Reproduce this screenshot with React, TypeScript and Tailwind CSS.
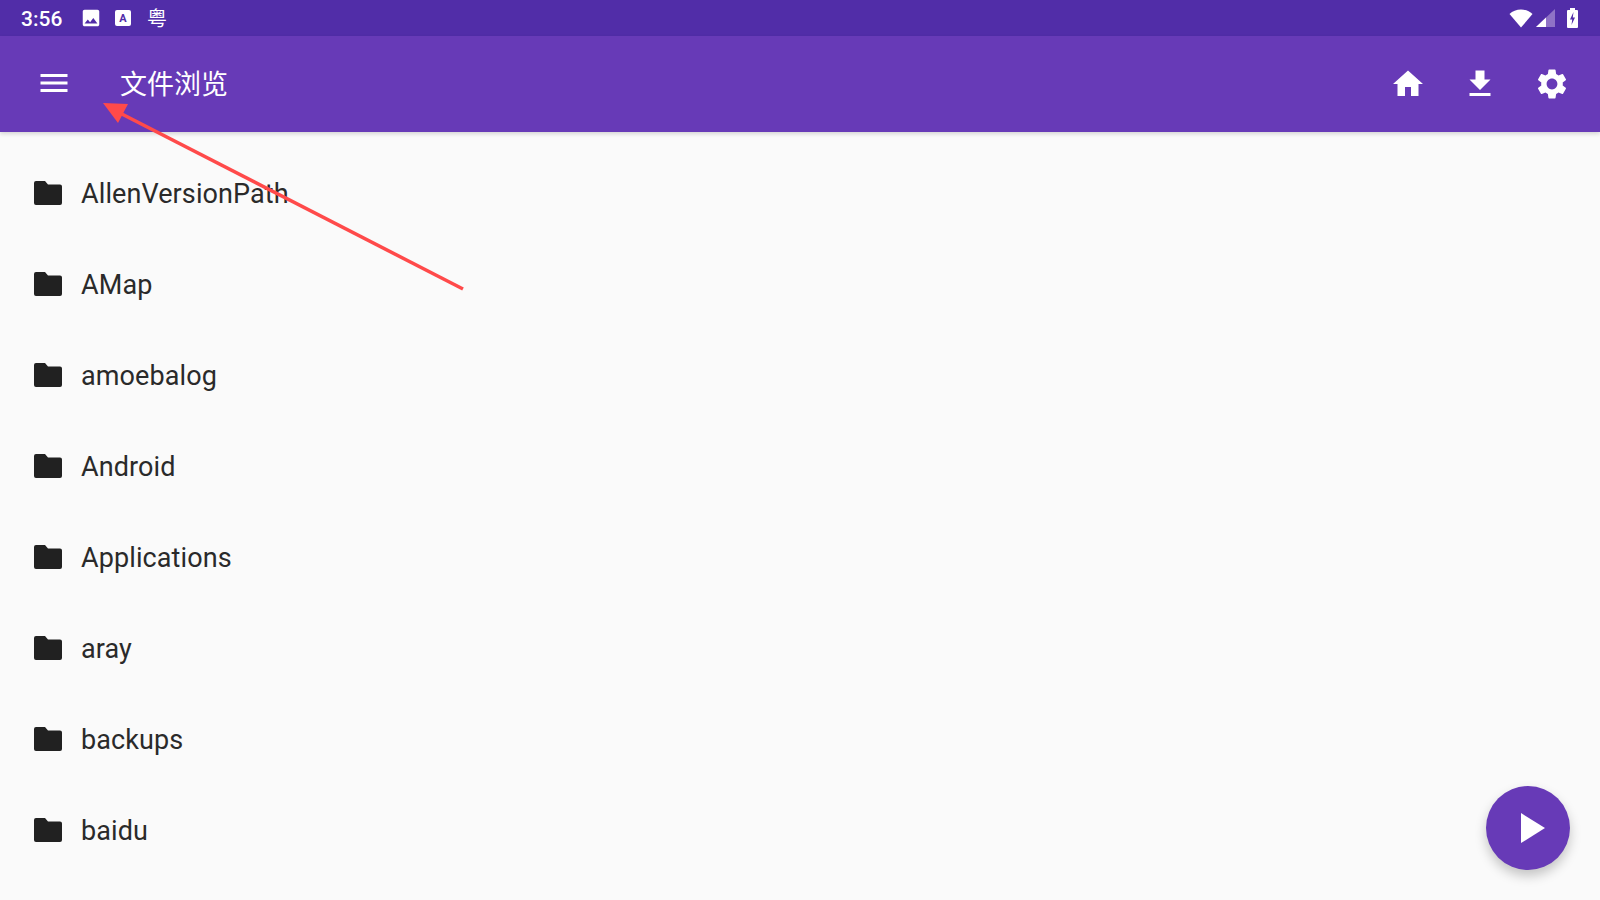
import React from "react";
import { MdHome, MdFileDownload, MdSettings, MdMenu, MdImage } from "react-icons/md";

const names = ["AllenVersionPath", "AMap", "amoebalog", "Android", "Applications", "aray", "backups", "baidu"];

function Folder() {
  return (
    <svg width="28" height="24" viewBox="0 0 28 24" className="shrink-0">
      <path d="M2 0h9l3 3.500h12a2 2 0 0 1 2 2V22a2 2 0 0 1-2 2H2a2 2 0 0 1-2-2V2a2 2 0 0 1 2-2z" fill="#212121" />
    </svg>
  );
}

export default function App() {
  return (
    <div className="relative w-[1600px] h-[900px] overflow-hidden bg-[#fafafa] flex flex-col" style={{ fontFamily: "Roboto, 'Noto Sans CJK SC', sans-serif" }}>
      <div className="h-9 shrink-0 bg-[#512da8] flex items-center pl-[21px] pr-[22px] text-white">
        <span className="text-[21px] font-medium w-[61px] leading-none mt-[2px]">3:56</span>
        <MdImage size={22} className="-ml-[2px] -mt-[1px]" />
        <span className="ml-[13px] w-[16px] h-[16px] bg-white rounded-[2px] flex items-center justify-center text-[11px] font-bold text-[#512da8] leading-none">A</span>
        <span className="ml-[16px] text-[20px] leading-none" style={{ fontFamily: "'Noto Sans CJK SC', sans-serif" }}>粤</span>
        <div className="ml-auto flex items-center">
          <svg width="24" height="19" viewBox="0 0 24 19"><path d="M12 18.500 0.500 5C3.500 2 7.500 0.500 12 0.500S20.500 2 23.500 5z" fill="#fff" /></svg>
          <svg width="19" height="19" viewBox="0 0 19 19" className="ml-[3px]"><path d="M0 18 19 0v18z" fill="#8f72c6" /><path d="M0 18 10 8.500V18z" fill="#fff" /></svg>
          <svg width="11" height="20" viewBox="0 0 11 20" className="ml-[12px]"><path d="M3 0h5v2h2a1 1 0 0 1 1 1v16a1 1 0 0 1-1 1H1a1 1 0 0 1-1-1V3a1 1 0 0 1 1-1h2z" fill="#fff" /><path d="M6.500 4 3 11.500h2.200L4.500 17 8 9.500H5.800z" fill="#512da8" /></svg>
        </div>
      </div>
      <div className="h-24 shrink-0 bg-[#673ab7] flex items-center pl-9 pr-[30px] text-white shadow-[0_2px_4px_rgba(0,0,0,0.15)] z-10">
        <MdMenu size={36} className="-mt-[2px]" />
        <span className="ml-[48px] text-[27px] leading-none -mt-[4px]" style={{ fontFamily: "'Noto Sans CJK SC', sans-serif", fontWeight: 400 }}>文件浏览</span>
        <div className="ml-auto flex items-center gap-9">
          <MdHome size={36} />
          <MdFileDownload size={36} />
          <MdSettings size={36} />
        </div>
      </div>
      <div className="pt-[15px] flex flex-col">
        {names.map((n) => (
          <div key={n} className="h-[91px] flex items-center pl-[34px]">
            <Folder />
            <span className="ml-[19px] text-[27px] tracking-[0.1px] text-[#2a2a2a] mt-[3px]">{n}</span>
          </div>
        ))}
      </div>
      <div className="absolute right-[30px] bottom-[30px] w-[84px] h-[84px] rounded-full bg-[#673ab7] flex items-center justify-center shadow-[0_6px_12px_rgba(0,0,0,0.22)]">
        <svg width="24" height="30" viewBox="0 0 24 30" className="ml-[10px]"><path d="M0 0 24 15 0 30z" fill="#fff" /></svg>
      </div>
      <svg className="absolute left-0 top-0 pointer-events-none z-20" width="1600" height="900">
        <path d="M463 289 116 111" stroke="#ff4a4a" strokeWidth="3.500" fill="none" />
        <path d="M103 103 128 104 118 123z" fill="#ff4a4a" />
      </svg>
    </div>
  );
}
